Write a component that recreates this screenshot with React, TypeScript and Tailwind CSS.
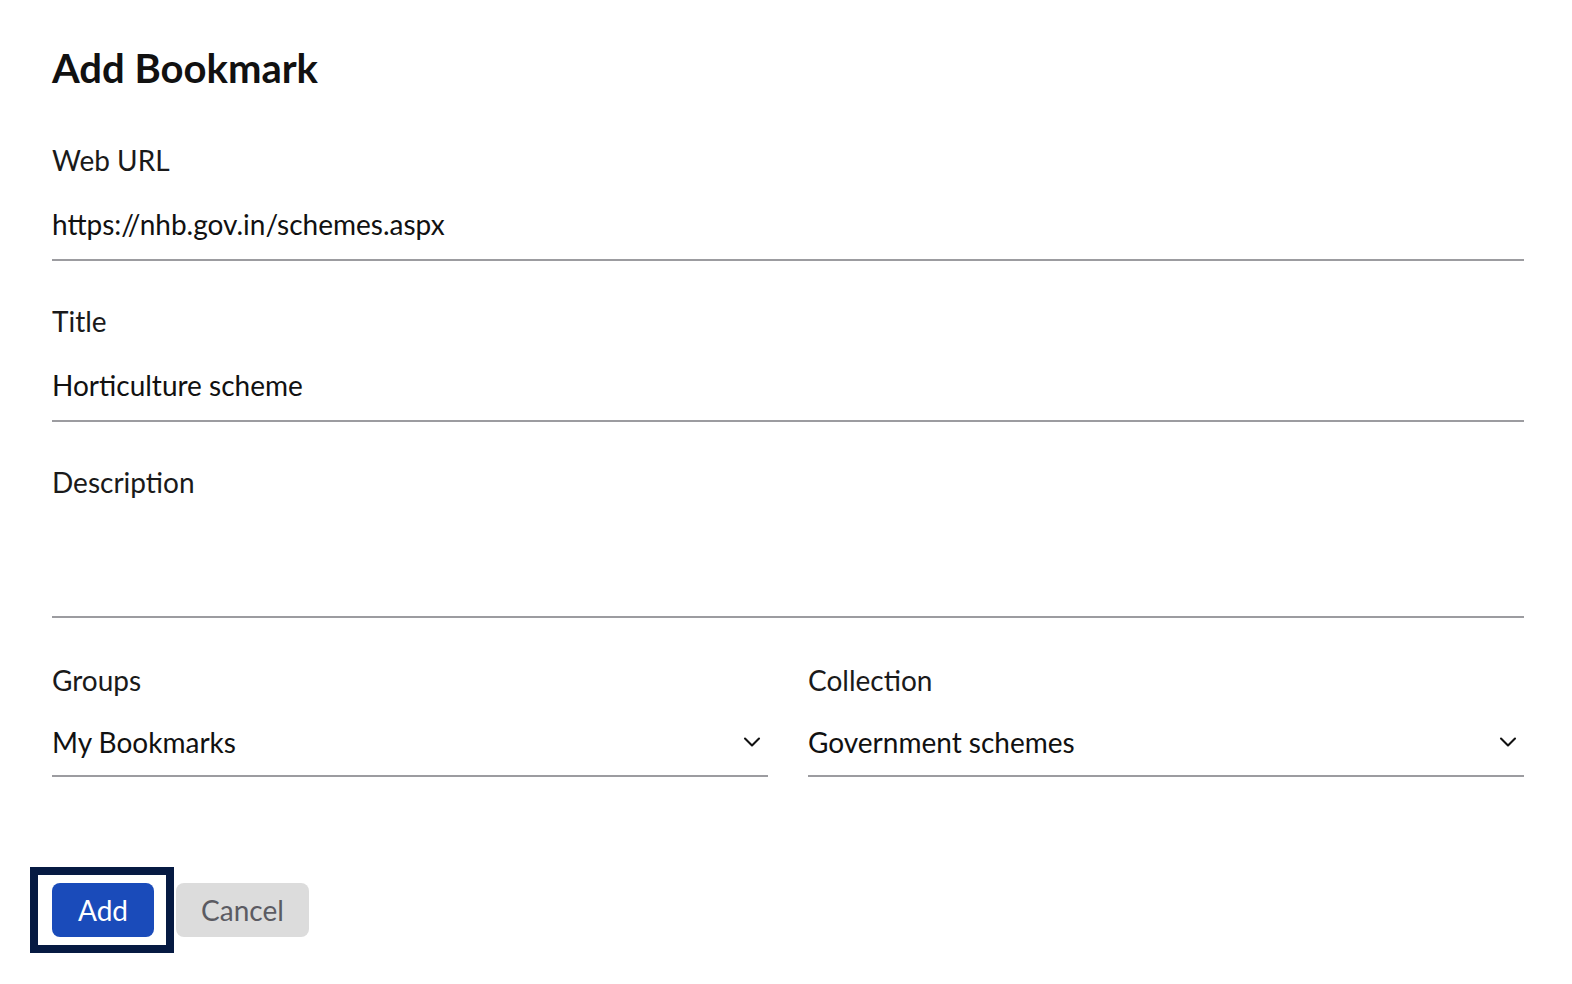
import { ChevronDown } from "lucide-react";

const font = { fontFamily: "Lato, 'Noto Sans', sans-serif" };

function Field({ label, value, tall, className }: { label: string; value?: string; tall?: boolean; className?: string }) {
  return (
    <div className={className}>
      <div className="text-[28px] leading-[32px] text-[#1a1a1a]">{label}</div>
      <div
        className={`mt-[32px] border-b-2 border-[#9c9ca0] text-[28px] leading-[32px] text-[#111] ${
          tall ? "h-[88px]" : "pb-[19px]"
        }`}
      >
        {value}
      </div>
    </div>
  );
}

function SelectField({ label, value }: { label: string; value: string }) {
  return (
    <div className="flex-1">
      <div className="text-[28px] leading-[32px] text-[#1a1a1a]">{label}</div>
      <div className="mt-[30px] flex items-center justify-between border-b-2 border-[#9c9ca0] pb-[17px] text-[28px] leading-[32px] text-[#111]">
        <span>{value}</span>
        <ChevronDown className="mr-[2px] h-[28px] w-[28px] text-[#111]" strokeWidth={1.8} />
      </div>
    </div>
  );
}

export default function App() {
  return (
    <div className="bg-white pl-[52px] pr-[48px] pt-[44px] pb-[30px]" style={font}>
      <h1 className="text-[40px] font-bold leading-[48px] text-[#111]">Add Bookmark</h1>

      <Field className="mt-[52px]" label="Web URL" value="https://nhb.gov.in/schemes.aspx" />
      <Field className="mt-[44px]" label="Title" value="Horticulture scheme" />
      <Field className="mt-[44px]" label="Description" tall />
      <div className="mt-[46px] flex gap-[40px]">
        <SelectField label="Groups" value="My Bookmarks" />
        <SelectField label="Collection" value="Government schemes" />
      </div>

      <div className="mt-[90px] flex items-center gap-[2px]">
        <div className="-ml-[22px] border-[8px] border-[#061a42] pt-[8px] pb-[8px] pl-[14px] pr-[12px]">
          <button className="h-[54px] rounded-[8px] bg-[#1a4bba] px-[26px] text-[28px] leading-[32px] text-white">
            Add
          </button>
        </div>
        <button className="h-[54px] rounded-[8px] bg-[#dcdcdc] px-[25px] text-[28px] leading-[32px] text-[#5b5b62]">
          Cancel
        </button>
      </div>
    </div>
  );
}
